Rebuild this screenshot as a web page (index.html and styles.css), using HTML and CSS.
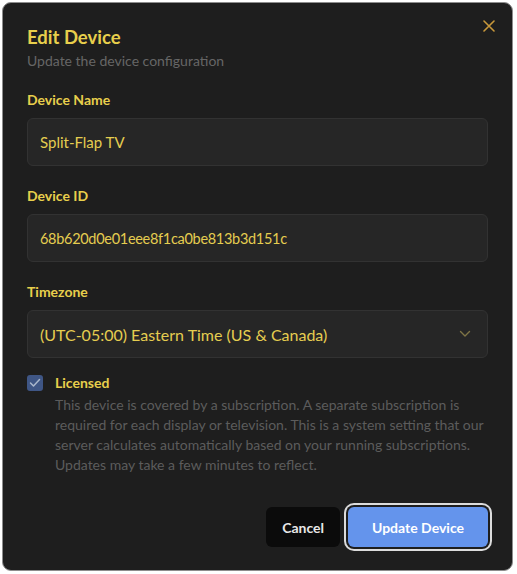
FILE: index.html
```html
<!DOCTYPE html>
<html lang="en">
<head>
<meta charset="utf-8">
<title>Edit Device</title>
<link rel="stylesheet" href="styles.css">
</head>
<body>
<div class="dialog">
  <button class="close" aria-label="Close">
    <svg width="12" height="12" viewBox="0 0 12 12"><path d="M1 1L11 11M11 1L1 11" stroke="currentColor" stroke-width="1.6" stroke-linecap="round"/></svg>
  </button>
  <div class="header">
    <h2 class="title">Edit Device</h2>
    <p class="subtitle">Update the device configuration</p>
  </div>
  <div class="field">
    <label class="label">Device Name</label>
    <div class="input">Split-Flap TV</div>
  </div>
  <div class="field">
    <label class="label">Device ID</label>
    <div class="input mono-id">68b620d0e01eee8f1ca0be813b3d151c</div>
  </div>
  <div class="field last">
    <label class="label">Timezone</label>
    <div class="input select">
      <span>(UTC-05:00) Eastern Time (US &amp; Canada)</span>
      <svg class="chev" width="12" height="8" viewBox="0 0 12 8"><path d="M1.5 1.5L6 6L10.5 1.5" fill="none" stroke="currentColor" stroke-width="1.4" stroke-linecap="round" stroke-linejoin="round"/></svg>
    </div>
  </div>
  <div class="check-row">
    <span class="checkbox">
      <svg width="12" height="10" viewBox="0 0 12 10"><path d="M1.5 5L4.5 8L10.5 1.5" fill="none" stroke="currentColor" stroke-width="1.5" stroke-linecap="round" stroke-linejoin="round"/></svg>
    </span>
    <div class="check-text">
      <div class="check-label">Licensed</div>
      <p class="check-desc">This device is covered by a subscription. A separate subscription is required for each display or television. This is a system setting that our server calculates automatically based on your running subscriptions. Updates may take a few minutes to reflect.</p>
    </div>
  </div>
  <div class="footer">
    <button class="btn cancel">Cancel</button>
    <button class="btn primary">Update Device</button>
  </div>
</div>
</body>
</html>
```
FILE: styles.css
```css
* { box-sizing: border-box; }
html, body { margin: 0; padding: 0; background: #ffffff; }
body {
  font-family: "Lato", "Noto Sans", sans-serif;
  padding: 2px;
}
.dialog {
  position: relative;
  width: 511px;
  height: 569px;
  background: #1e1e1e;
  border: 1px solid #8d8d8d;
  border-radius: 9px;
  padding: 20px 24px 23px 24px;
  display: flex;
  flex-direction: column;
}
.close {
  position: absolute;
  top: 13px;
  right: 13px;
  width: 20px;
  height: 20px;
  padding: 0;
  border: none;
  background: transparent;
  color: #c8983b;
  display: flex;
  align-items: center;
  justify-content: center;
}
.header { margin-bottom: 19px; }
.title {
  margin: 0;
  font-size: 18.5px;
  line-height: 28px;
  font-weight: 700;
  color: #e8cf4c;
}
.subtitle {
  margin: 0;
  font-size: 14px;
  line-height: 20px;
  color: #666666;
}
.field { display: flex; flex-direction: column; gap: 8px; margin-bottom: 20px; }
.field.last { margin-bottom: 15px; }
.label {
  font-size: 14px;
  line-height: 20px;
  font-weight: 700;
  color: #e8cf4c;
}
.input {
  height: 48px;
  background: #262626;
  border: 1px solid #323232;
  border-radius: 6px;
  padding: 0 12px;
  display: flex;
  align-items: center;
  font-size: 15px;
  color: #e5cd50;
}
.mono-id { font-size: 14.5px; letter-spacing: -0.3px; }
.select { justify-content: space-between; padding-right: 16px; font-size: 16px; }
.chev { color: #7e7446; }
.check-row { display: flex; gap: 12px; align-items: flex-start; }
.checkbox {
  flex: none;
  width: 16px;
  height: 16px;
  margin-top: 2px;
  border-radius: 3px;
  background: #3f5685;
  color: #aab7cc;
  display: flex;
  align-items: center;
  justify-content: center;
}
.check-label {
  font-size: 14px;
  line-height: 20px;
  font-weight: 700;
  color: #e8cf4c;
}
.check-desc {
  margin: 2px 0 0 0;
  font-size: 14px;
  line-height: 20px;
  color: #5c5c5c;
}
.footer {
  margin-top: auto;
  display: flex;
  justify-content: flex-end;
  align-items: center;
  gap: 8px;
}
.btn {
  font-family: inherit;
  height: 40px;
  border: none;
  border-radius: 6px;
  font-size: 14px;
  font-weight: 700;
  padding: 0 16px;
}
.cancel { background: #0b0b0b; color: #e8e8e8; }
.primary {
  background: #6494ec;
  color: #ffffff;
  padding: 0 24px;
  box-shadow: 0 0 0 2px #1e1e1e, 0 0 0 4px #dcdcdc;
}
```
